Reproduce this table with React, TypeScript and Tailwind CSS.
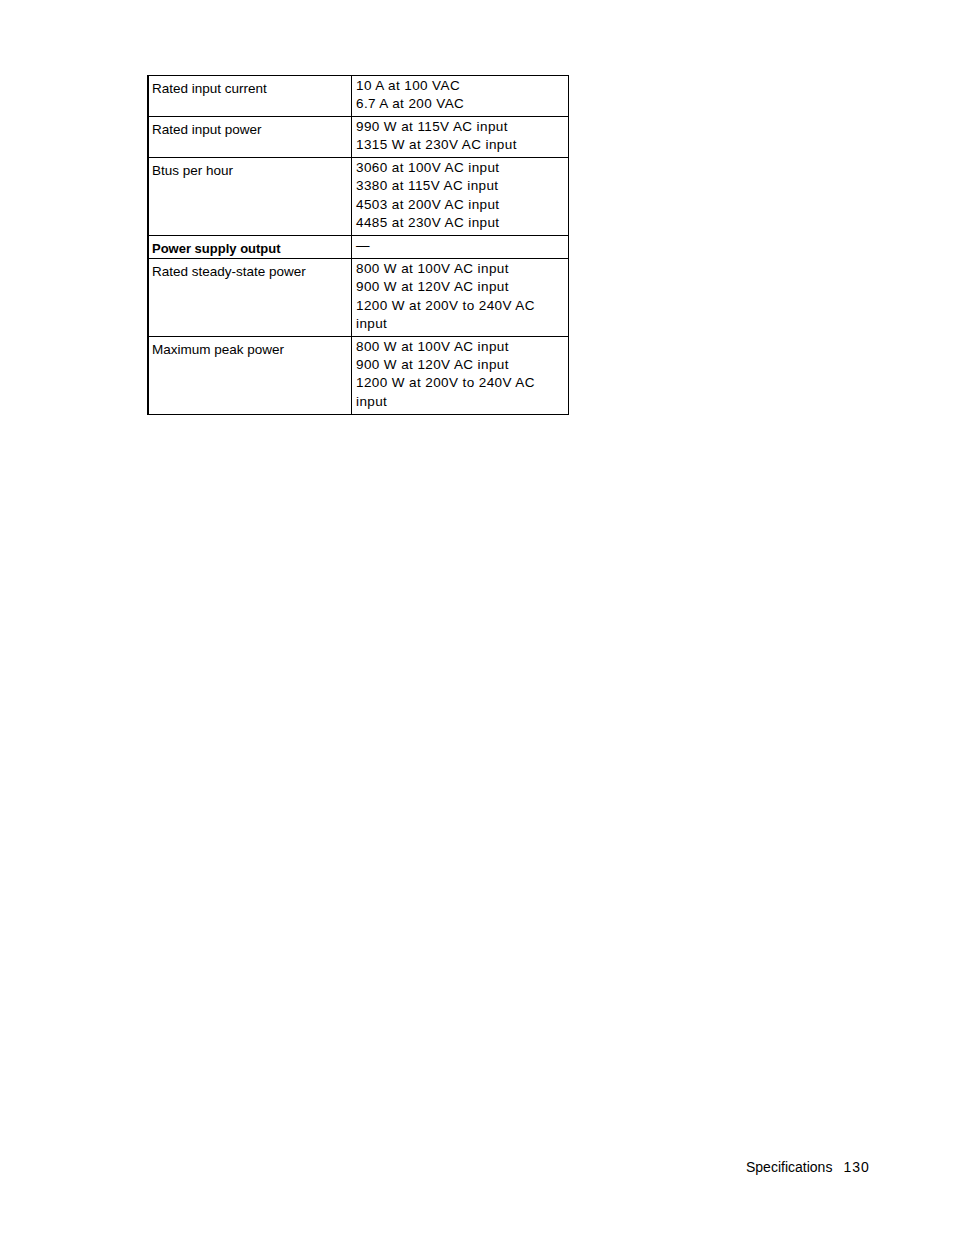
const rows: { label: string; bold?: boolean; lines: string[] }[] = [
  { label: "Rated input current", lines: ["10 A at 100 VAC", "6.7 A at 200 VAC"] },
  { label: "Rated input power", lines: ["990 W at 115V AC input", "1315 W at 230V AC input"] },
  {
    label: "Btus per hour",
    lines: ["3060 at 100V AC input", "3380 at 115V AC input", "4503 at 200V AC input", "4485 at 230V AC input"],
  },
  { label: "Power supply output", bold: true, lines: ["—"] },
  {
    label: "Rated steady-state power",
    lines: ["800 W at 100V AC input", "900 W at 120V AC input", "1200 W at 200V to 240V AC", "input"],
  },
  {
    label: "Maximum peak power",
    lines: ["800 W at 100V AC input", "900 W at 120V AC input", "1200 W at 200V to 240V AC", "input"],
  },
];

export default function App() {
  return (
    <div className="relative w-[954px] h-[1235px] bg-white text-black font-['Liberation_Sans',Arial,sans-serif] text-[13.5px] leading-[18.3px]">
      <div className="pt-[75px] pl-[147px]">
        <div className="w-[422px] border-t border-r border-l-2 border-black">
          {rows.map((r) => (
            <div key={r.label} className="flex border-b border-black">
              <div className="w-[203px] shrink-0 border-r border-black pl-[3px] pt-[4px]">
                <span className={r.bold ? "font-bold text-[13px]" : ""}>{r.label}</span>
              </div>
              <div className="pl-[4px] pt-[1px] pb-[2.5px] tracking-[0.4px]">
                {r.lines.map((l, i) => (
                  <div key={i}>{l}</div>
                ))}
              </div>
            </div>
          ))}
        </div>
      </div>
      <div className="absolute left-[746px] top-[1158px] flex gap-[11px] text-[14px] leading-[18px]">
        <span>Specifications</span>
        <span className="tracking-[1px]">130</span>
      </div>
    </div>
  );
}
